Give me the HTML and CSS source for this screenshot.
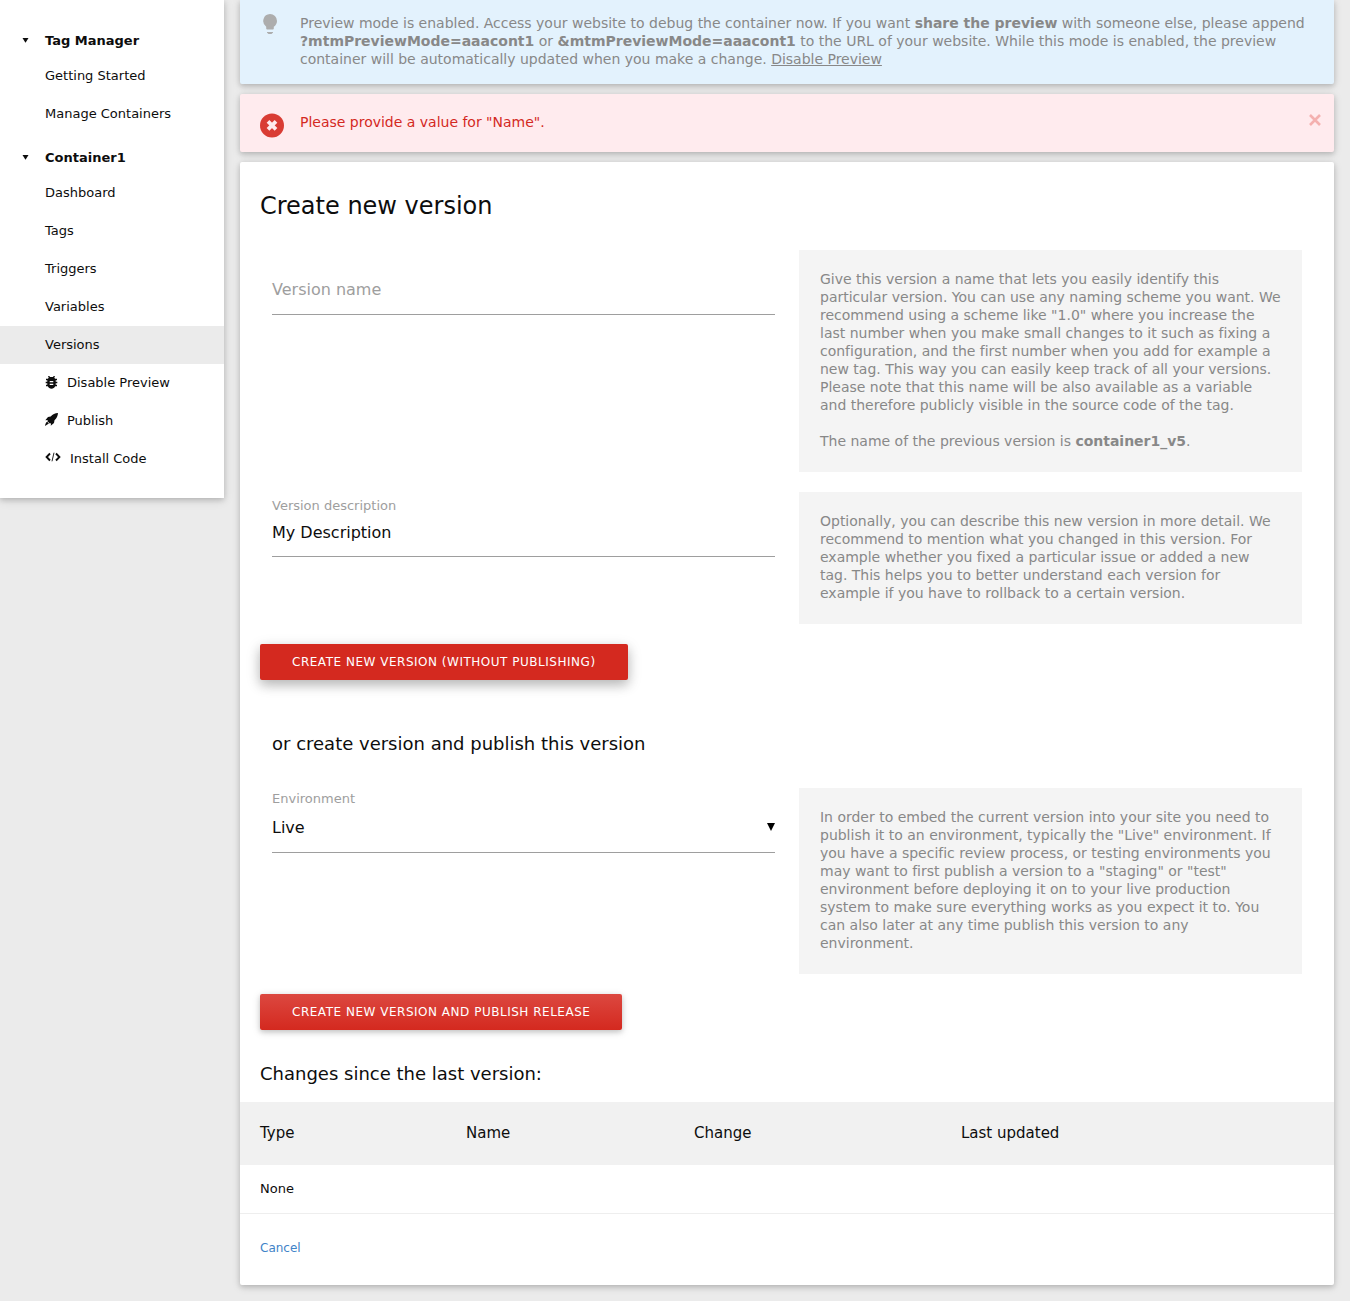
FILE: index.html
```html
<!DOCTYPE html>
<html lang="en">
<head>
<meta charset="utf-8">
<title>Tag Manager - Create new version</title>
<link rel="stylesheet" href="styles.css">
</head>
<body>
<div class="layout">
  <nav class="sidebar">
    <div class="menu-title"><svg class="caret" viewBox="0 0 7 5"><path d="M.5 0h6L3.500 4.700z"/></svg>Tag Manager</div>
    <a class="menu-item">Getting Started</a>
    <a class="menu-item">Manage Containers</a>
    <div class="menu-title"><svg class="caret" viewBox="0 0 7 5"><path d="M.5 0h6L3.500 4.700z"/></svg>Container1</div>
    <a class="menu-item">Dashboard</a>
    <a class="menu-item">Tags</a>
    <a class="menu-item">Triggers</a>
    <a class="menu-item">Variables</a>
    <a class="menu-item active">Versions</a>
    <a class="menu-item"><svg class="icon" width="13" height="13" viewBox="0 0 13 13"><path fill-rule="evenodd" d="M3 0H4.300L5 1H8L8.700 0H10L9.300 1.500 10 2.800H12V4.300H10.700V5.800H12.300V7.300H10.700V8.800H12V10.300H10.200C9.500 12 8.200 12.700 6.500 12.700S3.500 12 2.800 10.300H1V8.800H2.300V7.300H.7V5.800H2.300V4.300H1V2.800H3L3.700 1.500zM4.700 5V6.200H8.300V5zM4.700 7.800V9H8.300V7.800z"/></svg>Disable Preview</a>
    <a class="menu-item"><svg class="icon rocket" width="13" height="13" viewBox="0 0 13 13"><path d="M13 0C10 .2 7.700 1.300 5.700 3.500L3 4 .3 7.300l2.500-.4L2.400 8.200 4.800 10.600 6.100 10.200 5.700 12.800 9 10 9.500 7.200C11.700 5.200 12.800 3 13 0zM2.200 8.800C.9 9.300.5 10.600 0 13L3.900 10.500z"/></svg>Publish</a>
    <a class="menu-item"><svg class="icon code" width="16" height="10" viewBox="0 0 16 10"><path class="stroke" d="M5 1.500 1.600 5 5 8.500M11 1.500 14.400 5 11 8.500"/><path class="slash" d="M9 .7 7 9.300"/></svg>Install Code</a>
  </nav>

  <main class="content">
    <section class="notice notice-info">
      <svg class="bulb" width="14" height="20" viewBox="0 0 14 20"><path d="M7 0a7 7 0 0 1 7 7c0 2.500-1.300 4.500-3.200 5.700V14.500a1 1 0 0 1-1 1H4.200a1 1 0 0 1-1-1V12.700A7 7 0 0 1 7 0zM4 18h6v.6c0 .6-.4.7-.9.700l-.5.600H5.400l-.5-.6c-.5 0-.9-.1-.9-.7z"/></svg>
      <p>Preview mode is enabled. Access your website to debug the container now. If you want <strong>share the preview</strong> with someone else, please append <strong>?mtmPreviewMode=aaacont1</strong> or <strong>&amp;mtmPreviewMode=aaacont1</strong> to the URL of your website. While this mode is enabled, the preview container will be automatically updated when you make a change. <a class="underlined">Disable Preview</a></p>
    </section>

    <section class="notice notice-error">
      <svg class="error-icon" width="24" height="25" viewBox="0 0 24 25"><circle cx="12" cy="12.400" r="12"/><path d="m8 8.400 8 8m0-8-8 8"/></svg>
      <p>Please provide a value for "Name".</p>
      <svg class="close" width="12" height="12" viewBox="0 0 12 12"><path d="m1 1 10 10M11 1 1 11"/></svg>
    </section>

    <section class="card">
      <h2>Create new version</h2>
      <div class="form-row row-name">
        <div class="field"><div class="control placeholder">Version name</div></div>
        <aside class="help">Give this version a name that lets you easily identify this particular version. You can use any naming scheme you want. We recommend using a scheme like "1.0" where you increase the last number when you make small changes to it such as fixing a configuration, and the first number when you add for example a new tag. This way you can easily keep track of all your versions. Please note that this name will be also available as a variable and therefore publicly visible in the source code of the tag.<br><br>The name of the previous version is <strong>container1_v5</strong>.</aside>
      </div>
      <div class="form-row">
        <div class="field"><label>Version description</label><div class="control">My Description</div></div>
        <aside class="help">Optionally, you can describe this new version in more detail. We recommend to mention what you changed in this version. For example whether you fixed a particular issue or added a new<br>tag. This helps you to better understand each version for<br>example if you have to rollback to a certain version.</aside>
      </div>
      <button class="btn btn-focus">Create new version (without publishing)</button>
      <h3 class="publish-title">or create version and publish this version</h3>
      <div class="form-row row-environment">
        <div class="field"><label>Environment</label><div class="control select">Live<svg width="8" height="8" viewBox="0 0 8 8"><path d="M0 0h8L4 8z"/></svg></div></div>
        <aside class="help">In order to embed the current version into your site you need to publish it to an environment, typically the "Live" environment. If you have a specific review process, or testing environments you may want to first publish a version to a "staging" or "test" environment before deploying it on to your live production system to make sure everything works as you expect it to. You can also later at any time publish this version to any environment.</aside>
      </div>
      <button class="btn">Create new version and publish release</button>
      <h3 class="changes-title">Changes since the last version:</h3>
      <table class="changes">
        <colgroup><col class="c-type"><col class="c-name"><col class="c-change"><col></colgroup>
        <thead><tr><th>Type</th><th>Name</th><th>Change</th><th>Last updated</th></tr></thead>
        <tbody><tr><td colspan="4">None</td></tr></tbody>
      </table>
      <a class="cancel">Cancel</a>
    </section>
  </main>
</div>
</body>
</html>
```

FILE: styles.css
```css
* { box-sizing: border-box; }
body {
  margin: 0;
  background: #ebebeb;
  color: #0d0d0d;
  font: 13px/18px "DejaVu Sans", sans-serif;
}
h2, h3, p { margin: 0; font-weight: 400; }
svg { display: block; flex: none; }

.layout {
  display: flex;
  align-items: flex-start;
  gap: 16px;
  height: 1301px;
  padding-right: 16px;
}
.sidebar {
  width: 224px;
  flex: none;
  padding: 16px 0 20px;
  background: #fff;
}
.sidebar, .notice, .card, .btn {
  box-shadow: 0 2px 5px 0 rgba(0,0,0,.16), 0 2px 10px 0 rgba(0,0,0,.12);
}
.menu-title {
  display: flex;
  align-items: center;
  height: 41px;
  padding: 8px 0 0 22px;
  font-weight: 700;
}
.caret { width: 7px; height: 5px; margin: -1px 16px 0 0; fill: #0d0d0d; }
.menu-item {
  display: flex;
  align-items: center;
  height: 38px;
  padding-left: 45px;
}
.menu-item.active { background: #ebebeb; }
.icon { margin: -2px 9px 0 0; fill: #0d0d0d; }
.rocket { margin-top: -3px; }
.code { margin-top: -4px; }
.stroke { fill: none; stroke: #0d0d0d; stroke-width: 1.9; }
.slash { fill: none; stroke: #0d0d0d; stroke-width: .9; }

.content { flex: 1; min-width: 0; }
.notice {
  display: flex;
  align-items: flex-start;
  margin-bottom: 10px;
  border-radius: 2px;
  font-size: 14px;
  letter-spacing: -.008px;
}
.notice-info {
  height: 84px;
  padding: 14px 20px 0 23px;
  background: #e3f2fd;
  border-radius: 0 0 2px 2px;
  color: #888;
}
.bulb { margin-right: 23px; fill: #adadad; }
.underlined { text-decoration: underline; }
.notice-error {
  height: 58px;
  padding: 19px 13px 0 20px;
  background: #ffebee;
  color: #d4291f;
}
.error-icon { margin-right: 16px; fill: #d93c34; }
.error-icon path { stroke: #ffebee; stroke-width: 3.800; }
.close { margin: 1px 0 0 auto; fill: none; stroke: #f4b0af; stroke-width: 2.600; }

.card {
  height: 1123px;
  padding-top: 28px;
  background: #fff;
  border-radius: 2px;
}
h2 { margin: 0 20px 28px; font-size: 24px; line-height: 32px; }
.form-row {
  display: grid;
  grid-template-columns: 503px 503px;
  gap: 24px;
  margin: 0 32px 20px;
}
.help {
  padding: 20px 20px 22px 21px;
  background: #f4f4f4;
  color: #888;
  font-size: 14px;
  letter-spacing: -.008px;
}
.field { padding-top: 5px; }
.row-name .field { padding-top: 23px; }
.row-environment .field { padding-top: 2px; }
label { display: block; color: #9e9e9e; }
.control {
  height: 42px;
  border-bottom: 1px solid #9e9e9e;
  font-size: 16px;
  line-height: 35px;
}
.placeholder { line-height: 33px; color: #9e9e9e; }
.select {
  display: flex;
  justify-content: space-between;
  align-items: center;
  height: 45px;
  line-height: 32px;
  padding-bottom: 5px;
}
.select svg { margin-top: -2px; }
.btn {
  display: block;
  height: 36px;
  margin-left: 20px;
  padding: 0 32px;
  border: 0;
  border-radius: 2px;
  background: linear-gradient(#dc4840, #d4291f);
  color: #fff;
  font: 12px/36px "DejaVu Sans", sans-serif;
  letter-spacing: .515px;
  text-transform: uppercase;
}
.btn-focus {
  background: #d4291f;
  box-shadow: 0 5px 11px 0 rgba(0,0,0,.18), 0 4px 15px 0 rgba(0,0,0,.15);
}
h3 { font-size: 18px; line-height: 24px; }
.publish-title { margin: 52px 32px 32px; }
.changes-title { margin: 32px 20px 16px; }
.changes {
  width: 100%;
  table-layout: fixed;
  border-collapse: separate;
  border-spacing: 0;
}
.c-type { width: 206px; }
.c-name { width: 228px; }
.c-change { width: 267px; }
.changes th {
  height: 63px;
  padding: 0 20px 1px;
  background: #f1f1f1;
  font-size: 15px;
  font-weight: 400;
  text-align: left;
}
.changes td {
  height: 49px;
  padding: 0 20px;
  border-bottom: 1px solid #eee;
}
.cancel {
  display: block;
  margin: 25px 20px 0;
  color: #4183c8;
  font-size: 12px;
}
```
